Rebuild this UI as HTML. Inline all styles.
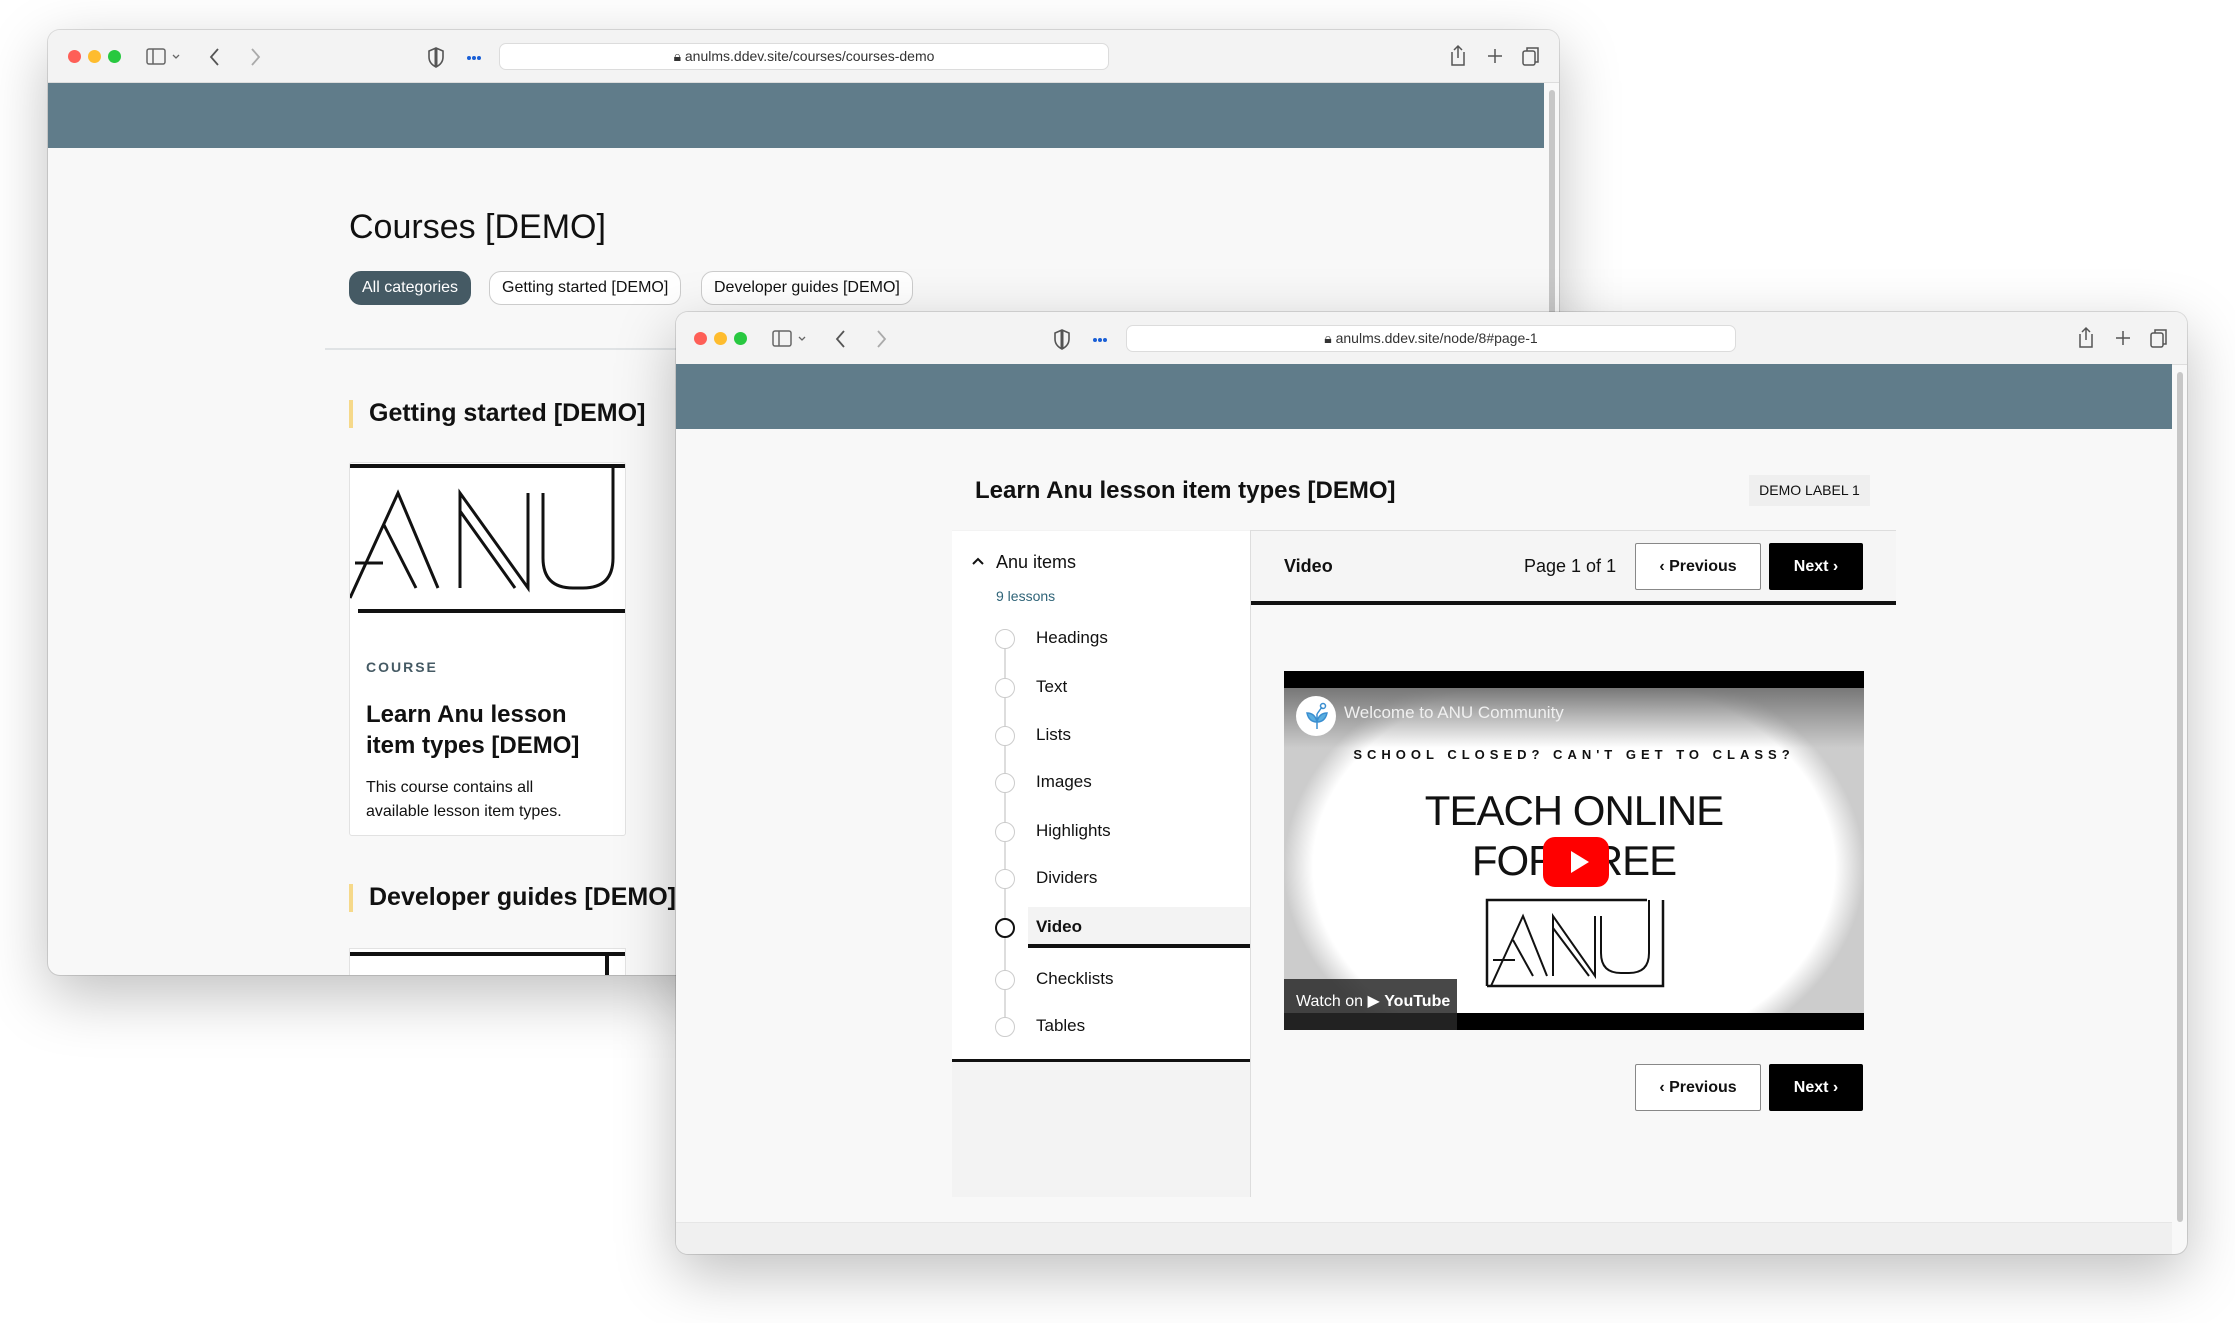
<!DOCTYPE html>
<html><head><meta charset="utf-8">
<style>
*{box-sizing:border-box;margin:0;padding:0}
body{width:2235px;height:1323px;background:#fff;position:relative;overflow:hidden;font-family:"Liberation Sans",sans-serif;color:#111}
.abs{position:absolute}
.win{position:absolute;background:#f8f8f8;border-radius:12px;overflow:hidden;box-shadow:0 20px 60px rgba(0,0,0,.25),0 0 0 1px rgba(0,0,0,.12)}
.tb{position:absolute;left:0;top:0;right:0;height:53px;background:#f3f3f3;border-bottom:1px solid #ddd}
.dot{position:absolute;width:13px;height:13px;border-radius:50%;top:20px}
.url{position:absolute;top:13px;height:27px;background:#fff;border:1px solid #dcdcdc;border-radius:7px;font-size:14px;color:#333;text-align:center;line-height:25px}
.band{position:absolute;left:0;right:0;top:53px;height:65px;background:#607c8a}
.pill{position:absolute;top:241px;height:34px;border-radius:12px;border:1px solid #ccc;background:#fff;font-size:16px;line-height:32px;padding:0 12px}
.btn{position:absolute;height:47px;font-size:16px;font-weight:bold;line-height:45px;text-align:center;border-radius:2px}
.prev{background:#fff;border:1px solid #888;color:#111}
.next{background:#000;color:#fff;border:1px solid #000}
.circ{position:absolute;width:20px;height:20px;border:1.5px solid #ccc;border-radius:50%;background:#fff}
</style></head><body>

<!-- back window -->
<div class="win" style="left:48px;top:30px;width:1511px;height:945px">
 <div class="tb">
  <div class="dot" style="left:20px;background:#fe5f57"></div>
  <div class="dot" style="left:40px;background:#febc2e"></div>
  <div class="dot" style="left:60px;background:#28c840"></div>
  <svg class="abs" style="left:98px;top:17px" width="40" height="20"><rect x="1" y="2" width="18" height="15" rx="2" fill="none" stroke="#666" stroke-width="1.5"/><line x1="7" y1="2" x2="7" y2="17" stroke="#666" stroke-width="1.5"/><path d="M27 8l3 3 3-3" fill="none" stroke="#666" stroke-width="1.3"/></svg>
  <svg class="abs" style="left:160px;top:16px" width="60" height="22"><path d="M10 3l-7 8 7 8" fill="none" stroke="#555" stroke-width="1.8"/><path d="M44 3l7 8-7 8" fill="none" stroke="#aaa" stroke-width="1.8"/></svg>
  <svg class="abs" style="left:380px;top:16px" width="60" height="22"><path d="M8 2l7 3v6c0 5-3 8-7 10-4-2-7-5-7-10V5z" fill="none" stroke="#555" stroke-width="1.6"/><path d="M8 2v19" stroke="#555" stroke-width="3"/><circle cx="41" cy="12" r="2" fill="#1a5fd6"/><circle cx="46" cy="12" r="2" fill="#1a5fd6"/><circle cx="51" cy="12" r="2" fill="#1a5fd6"/></svg>
  <div class="url" style="left:451px;width:610px">🔒︎ anulms.ddev.site/courses/courses-demo</div>
  <svg class="abs" style="left:1395px;top:14px" width="100" height="26"><path d="M9 8V21h12V8M15 2v12M11 6l4-4 4 4" fill="none" stroke="#555" stroke-width="1.5"/><path d="M52 5v14M45 12h14" stroke="#555" stroke-width="1.5"/><rect x="80" y="7" width="12" height="14" rx="2" fill="none" stroke="#555" stroke-width="1.5"/><path d="M84 7V4h11v14h-3" fill="none" stroke="#555" stroke-width="1.5"/></svg>
 </div>
 <div class="band" style="right:15px"></div>
 <div class="abs" style="right:4px;top:60px;width:6px;height:900px;background:#c7c7c7;border-radius:3px"></div>
 <div class="abs" style="left:301px;top:178px;font-size:34px">Courses [DEMO]</div>
 <div class="pill" style="left:301px;background:#455a64;color:#fff;border-color:#455a64">All categories</div>
 <div class="pill" style="left:441px">Getting started [DEMO]</div>
 <div class="pill" style="left:653px">Developer guides [DEMO]</div>
 <div class="abs" style="left:277px;top:318px;width:400px;height:2px;background:#e0e3e5"></div>
 <div class="abs" style="left:301px;top:370px;width:4px;height:28px;background:#f6d98a"></div>
 <div class="abs" style="left:321px;top:369px;font-size:25px;font-weight:bold">Getting started [DEMO]</div>
 <div class="abs" style="left:301px;top:432px;width:277px;height:374px;background:#fff;border:1px solid #e2e2e2;border-radius:3px;overflow:hidden">
  <svg width="277" height="155"><line x1="0" x2="277" y1="3" y2="3" stroke="#111" stroke-width="4"/><line x1="8" x2="277" y1="148" y2="148" stroke="#111" stroke-width="4"/><path d="M263 3V95q0 30-30 30h-10q-30 0-30-30V30" fill="none" stroke="#111" stroke-width="3"/><path d="M0 135L48 30 88 125M34 62L66 125M5 100h28" fill="none" stroke="#111" stroke-width="3"/><path d="M110 125V30l68 95V30M110 48l55 77" fill="none" stroke="#111" stroke-width="3"/></svg>
  <div class="abs" style="left:16px;top:196px;font-size:14px;font-weight:bold;letter-spacing:2px;color:#455a64">COURSE</div>
  <div class="abs" style="left:16px;top:236px;font-size:24px;font-weight:bold;line-height:31px">Learn Anu lesson<br>item types [DEMO]</div>
  <div class="abs" style="left:16px;top:313px;font-size:16px;line-height:24px">This course contains all<br>available lesson item types.</div>
 </div>
 <div class="abs" style="left:301px;top:854px;width:4px;height:28px;background:#f6d98a"></div>
 <div class="abs" style="left:321px;top:853px;font-size:25px;font-weight:bold">Developer guides [DEMO]</div>
 <div class="abs" style="left:301px;top:918px;width:277px;height:40px;background:#fff;border:1px solid #e2e2e2;overflow:hidden"><div style="height:4px;background:#111;margin-top:3px"></div><div class="abs" style="left:255px;top:3px;width:4px;height:40px;background:#111"></div></div>
</div>

<!-- front window -->
<div class="win" style="left:676px;top:312px;width:1511px;height:942px">
 <div class="tb">
  <div class="dot" style="left:18px;background:#fe5f57"></div>
  <div class="dot" style="left:38px;background:#febc2e"></div>
  <div class="dot" style="left:58px;background:#28c840"></div>
  <svg class="abs" style="left:96px;top:17px" width="40" height="20"><rect x="1" y="2" width="18" height="15" rx="2" fill="none" stroke="#666" stroke-width="1.5"/><line x1="7" y1="2" x2="7" y2="17" stroke="#666" stroke-width="1.5"/><path d="M27 8l3 3 3-3" fill="none" stroke="#666" stroke-width="1.3"/></svg>
  <svg class="abs" style="left:158px;top:16px" width="60" height="22"><path d="M10 3l-7 8 7 8" fill="none" stroke="#555" stroke-width="1.8"/><path d="M44 3l7 8-7 8" fill="none" stroke="#aaa" stroke-width="1.8"/></svg>
  <svg class="abs" style="left:378px;top:16px" width="60" height="22"><path d="M8 2l7 3v6c0 5-3 8-7 10-4-2-7-5-7-10V5z" fill="none" stroke="#555" stroke-width="1.6"/><path d="M8 2v19" stroke="#555" stroke-width="3"/><circle cx="41" cy="12" r="2" fill="#1a5fd6"/><circle cx="46" cy="12" r="2" fill="#1a5fd6"/><circle cx="51" cy="12" r="2" fill="#1a5fd6"/></svg>
  <div class="url" style="left:450px;width:610px">🔒︎ anulms.ddev.site/node/8#page-1</div>
  <svg class="abs" style="left:1395px;top:14px" width="100" height="26"><path d="M9 8V21h12V8M15 2v12M11 6l4-4 4 4" fill="none" stroke="#555" stroke-width="1.5"/><path d="M52 5v14M45 12h14" stroke="#555" stroke-width="1.5"/><rect x="80" y="7" width="12" height="14" rx="2" fill="none" stroke="#555" stroke-width="1.5"/><path d="M84 7V4h11v14h-3" fill="none" stroke="#555" stroke-width="1.5"/></svg>
 </div>
 <div class="band" style="top:52px;right:15px"></div>
 <div class="abs" style="right:4px;top:60px;width:6px;height:850px;background:#c7c7c7;border-radius:3px"></div>
 <div class="abs" style="left:0;right:15px;top:910px;height:32px;background:#f0f0f0;border-top:1px solid #e6e6e6"></div>

 <div class="abs" style="left:299px;top:165px;font-size:24px;font-weight:bold">Learn Anu lesson item types [DEMO]</div>
 <div class="abs" style="left:1073px;top:163px;width:121px;height:31px;background:#efefef;font-size:14px;line-height:31px;text-align:center">DEMO LABEL 1</div>

 <div class="abs" style="left:276px;top:218px;width:944px;height:1px;background:#ddd"></div>
 <div class="abs" style="left:276px;top:218px;width:298px;height:667px;background:#f3f3f3"></div>
 <div class="abs" style="left:276px;top:219px;width:298px;height:531px;background:#fff;border-bottom:3px solid #111"></div>
 <div class="abs" style="left:574px;top:218px;width:1px;height:667px;background:#ddd"></div>
 <svg class="abs" style="left:295px;top:244px" width="14" height="10"><path d="M2 8l5-5 5 5" fill="none" stroke="#111" stroke-width="2"/></svg>
 <div class="abs" style="left:320px;top:240px;font-size:18px">Anu items</div>
 <div class="abs" style="left:320px;top:276px;font-size:14px;color:#2f6478">9 lessons</div>
 <div class="abs" style="left:328px;top:330px;width:2px;height:385px;background:#ddd"></div>
 <div class="abs" style="left:352px;top:595px;width:222px;height:41px;background:#f3f3f3;border-bottom:4px solid #111"></div>
 <div class="circ" style="left:319px;top:317px"></div><div class="abs" style="left:360px;top:316px;font-size:17px">Headings</div>
 <div class="circ" style="left:319px;top:366px"></div><div class="abs" style="left:360px;top:365px;font-size:17px">Text</div>
 <div class="circ" style="left:319px;top:414px"></div><div class="abs" style="left:360px;top:413px;font-size:17px">Lists</div>
 <div class="circ" style="left:319px;top:461px"></div><div class="abs" style="left:360px;top:460px;font-size:17px">Images</div>
 <div class="circ" style="left:319px;top:510px"></div><div class="abs" style="left:360px;top:509px;font-size:17px">Highlights</div>
 <div class="circ" style="left:319px;top:557px"></div><div class="abs" style="left:360px;top:556px;font-size:17px">Dividers</div>
 <div class="circ" style="left:319px;top:606px;border:2px solid #111"></div><div class="abs" style="left:360px;top:605px;font-size:17px;font-weight:bold">Video</div>
 <div class="circ" style="left:319px;top:658px"></div><div class="abs" style="left:360px;top:657px;font-size:17px">Checklists</div>
 <div class="circ" style="left:319px;top:705px"></div><div class="abs" style="left:360px;top:704px;font-size:17px">Tables</div>

 <div class="abs" style="left:575px;top:219px;width:645px;height:70px;background:#f5f5f5"></div>
 <div class="abs" style="left:575px;top:289px;width:645px;height:4px;background:#111"></div>
 <div class="abs" style="left:608px;top:244px;font-size:18px;font-weight:bold">Video</div>
 <div class="abs" style="left:848px;top:244px;font-size:18px">Page 1 of 1</div>
 <div class="btn prev" style="left:959px;top:231px;width:126px">‹ Previous</div>
 <div class="btn next" style="left:1093px;top:231px;width:94px">Next ›</div>

 <div class="abs" style="left:608px;top:359px;width:580px;height:359px;background:#000;overflow:hidden">
  <div class="abs" style="left:0;top:17px;width:580px;height:325px;background:radial-gradient(ellipse 50% 66% at 50% 55%,#fff 90%,#ccc 100%)"></div>
  <div class="abs" style="left:0;top:17px;width:580px;height:60px;background:linear-gradient(#777,rgba(255,255,255,0))"></div>
  <div class="abs" style="left:12px;top:25px;width:40px;height:40px;border-radius:50%;background:#fff"></div>
  <svg class="abs" style="left:20px;top:31px" width="26" height="28"><path d="M13 27V12M13 20q-8 0-10-9 8 0 10 9M13 20q8 0 10-9-8 0-10 9M13 12l5-7" fill="#5aaee0" stroke="#3a8ed0" stroke-width="1.5"/><circle cx="19" cy="4" r="2.5" fill="none" stroke="#3a8ed0" stroke-width="1.5"/></svg>
  <div class="abs" style="left:60px;top:32px;font-size:17px;color:#f0f0f0">Welcome to ANU Community</div>
  <div class="abs" style="left:0;top:76px;width:580px;text-align:center;font-size:13px;font-weight:bold;letter-spacing:5px">SCHOOL CLOSED? CAN'T GET TO CLASS?</div>
  <div class="abs" style="left:0;top:115px;width:580px;text-align:center;font-size:42px;line-height:50px;letter-spacing:-1px">TEACH ONLINE<br>FOR FREE</div>
  <div class="abs" style="left:259px;top:166px;width:66px;height:50px;background:#f00;border-radius:12px"></div>
  <div class="abs" style="left:287px;top:180px;width:0;height:0;border-left:18px solid #fff;border-top:11px solid transparent;border-bottom:11px solid transparent"></div>
  <svg class="abs" style="left:201px;top:227px" width="182" height="92"><path d="M2 88V2h160M178 2V88H2" fill="none" stroke="#111" stroke-width="2.5"/><path d="M164 2V55q0 20-20 20h-8q-20 0-20-20V18" fill="none" stroke="#111" stroke-width="2"/><path d="M6 88L38 18 62 78M28 42L48 78M8 62h22" fill="none" stroke="#111" stroke-width="2"/><path d="M68 78V18l42 60V18M68 30l36 48" fill="none" stroke="#111" stroke-width="2"/></svg>
  <div class="abs" style="left:0;top:308px;width:173px;height:51px;background:rgba(40,40,40,.85);color:#fff;font-size:16px;line-height:45px;padding-left:12px">Watch on ▶ <b>YouTube</b></div>
 </div>

 <div class="btn prev" style="left:959px;top:752px;width:126px">‹ Previous</div>
 <div class="btn next" style="left:1093px;top:752px;width:94px">Next ›</div>
</div>
</body></html>
